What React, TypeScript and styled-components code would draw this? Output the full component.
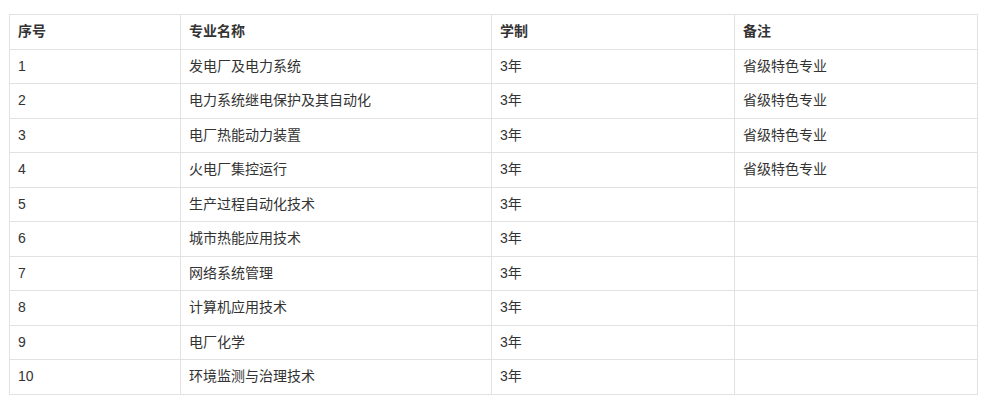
import React from "react";
import styled, { createGlobalStyle } from "styled-components";

const Global = createGlobalStyle`
  html, body { margin: 0; padding: 0; background: #fff; }
  body { font-family: "Liberation Sans", "Noto Sans CJK SC", sans-serif; }
`;

const Page = styled.div`
  padding: 14px 14px 0 9px;
`;

const Table = styled.table`
  width: 968px;
  border-collapse: collapse;
  table-layout: fixed;
  font-size: 14px;
  color: #333;
`;

const Col = styled.col<{ $w: number }>`
  width: ${(p) => p.$w}px;
`;

const Cell = styled.td<{ $head?: boolean }>`
  border: 1px solid #e2e2e2;
  padding: 8px;
  line-height: 17.5px;
  height: 17.5px;
  text-align: left;
  vertical-align: middle;
  font-weight: ${(p) => (p.$head ? 700 : 400)};
  white-space: nowrap;
`;

const widths = [171, 311, 243, 243];
const head = ["序号", "专业名称", "学制", "备注"];

const rows: [string, string, string, string][] = [
  ["1", "发电厂及电力系统", "3年", "省级特色专业"],
  ["2", "电力系统继电保护及其自动化", "3年", "省级特色专业"],
  ["3", "电厂热能动力装置", "3年", "省级特色专业"],
  ["4", "火电厂集控运行", "3年", "省级特色专业"],
  ["5", "生产过程自动化技术", "3年", ""],
  ["6", "城市热能应用技术", "3年", ""],
  ["7", "网络系统管理", "3年", ""],
  ["8", "计算机应用技术", "3年", ""],
  ["9", "电厂化学", "3年", ""],
  ["10", "环境监测与治理技术", "3年", ""],
];

export default function App() {
  return (
    <Page>
      <Global />
      <Table>
        <colgroup>
          {widths.map((w, i) => (
            <Col key={i} $w={w} />
          ))}
        </colgroup>
        <thead>
          <tr>
            {head.map((h) => (
              <Cell as="th" $head key={h}>
                {h}
              </Cell>
            ))}
          </tr>
        </thead>
        <tbody>
          {rows.map((r) => (
            <tr key={r[0]}>
              {r.map((c, i) => (
                <Cell key={i}>{c}</Cell>
              ))}
            </tr>
          ))}
        </tbody>
      </Table>
    </Page>
  );
}
